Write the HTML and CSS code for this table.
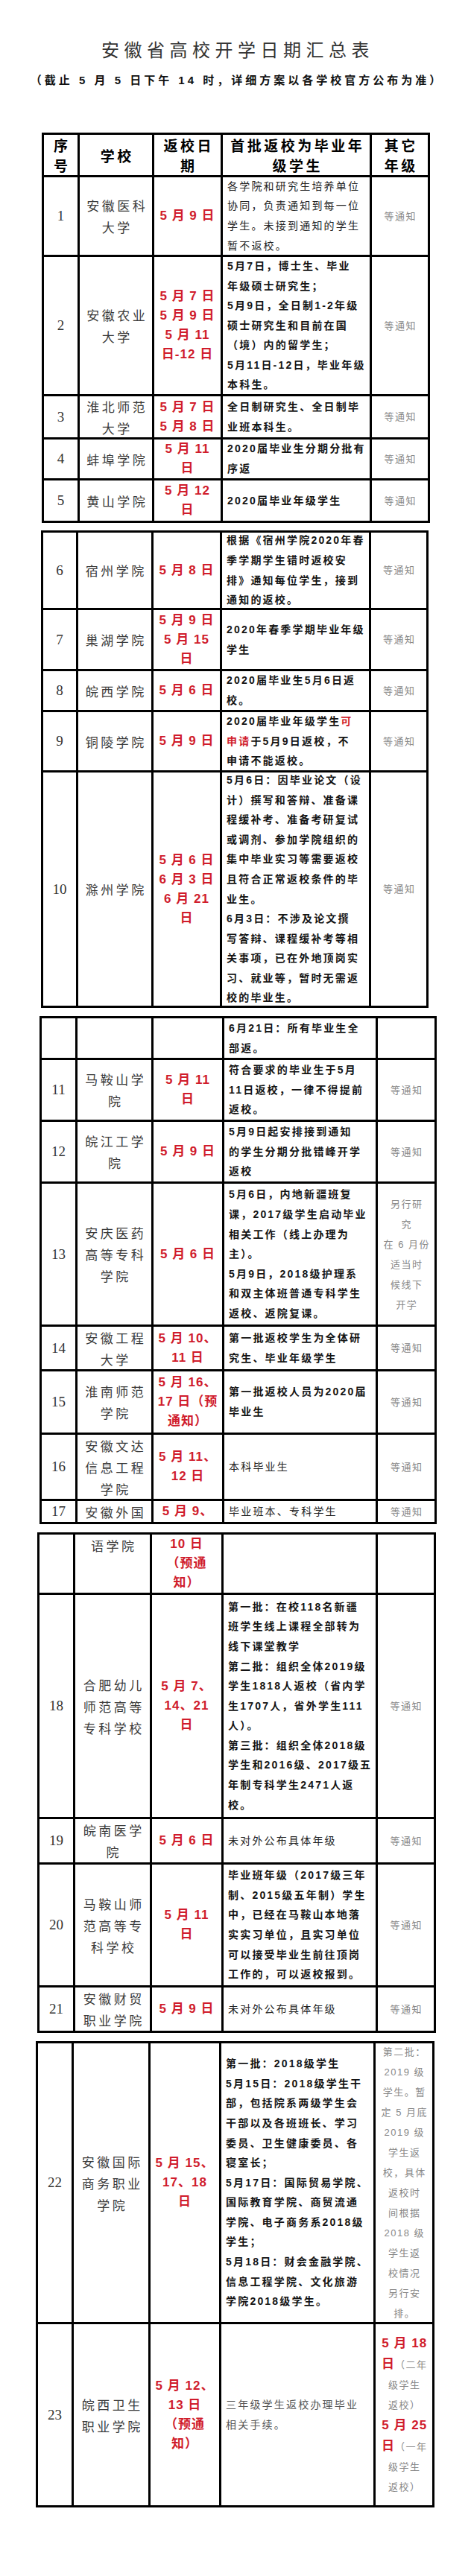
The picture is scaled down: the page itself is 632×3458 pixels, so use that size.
FILE: index.html
```html
<!DOCTYPE html>
<html lang="zh-CN">
<head>
<meta charset="utf-8">
<title>安徽省高校开学日期汇总表</title>
<link rel="stylesheet" href="styles.css">
</head>
<body>
<div class="page">
  <h1 class="title">安徽省高校开学日期汇总表</h1>
  <p class="subtitle">（截止 5 月 5 日下午 14 时，详细方案以各学校官方公布为准）</p>

  <div class="tbl t1">
    <div class="c hd"><span class="in">序<br>号</span></div>
    <div class="c hd"><span class="in">学校</span></div>
    <div class="c hd"><span class="in">返校日<br>期</span></div>
    <div class="c hd"><span class="in">首批返校为毕业年<br>级学生</span></div>
    <div class="c hd"><span class="in">其它<br>年级</span></div>

    <div class="c n"><span class="in">1</span></div>
    <div class="c s"><span class="in">安徽医科<br>大学</span></div>
    <div class="c d"><span class="in">5 月 9 日</span></div>
    <div class="c t lt"><span class="in">各学院和研究生培养单位<br>协同，负责通知到每一位<br>学生。未接到通知的学生<br>暂不返校。</span></div>
    <div class="c o"><span class="in">等通知</span></div>

    <div class="c n"><span class="in">2</span></div>
    <div class="c s"><span class="in">安徽农业<br>大学</span></div>
    <div class="c d"><span class="in">5 月 7 日<br>5 月 9 日<br>5 月 11<br>日-12 日</span></div>
    <div class="c t"><span class="in">5月7日，博士生、毕业<br>年级硕士研究生；<br>5月9日，全日制1-2年级<br>硕士研究生和目前在国<br>（境）内的留学生；<br>5月11日-12日，毕业年级<br>本科生。</span></div>
    <div class="c o"><span class="in">等通知</span></div>

    <div class="c n"><span class="in">3</span></div>
    <div class="c s"><span class="in">淮北师范<br>大学</span></div>
    <div class="c d"><span class="in">5 月 7 日<br>5 月 8 日</span></div>
    <div class="c t"><span class="in">全日制研究生、全日制毕<br>业班本科生。</span></div>
    <div class="c o"><span class="in">等通知</span></div>

    <div class="c n"><span class="in">4</span></div>
    <div class="c s"><span class="in">蚌埠学院</span></div>
    <div class="c d"><span class="in">5 月 11<br>日</span></div>
    <div class="c t"><span class="in">2020届毕业生分期分批有<br>序返</span></div>
    <div class="c o"><span class="in">等通知</span></div>

    <div class="c n"><span class="in">5</span></div>
    <div class="c s"><span class="in">黄山学院</span></div>
    <div class="c d"><span class="in">5 月 12<br>日</span></div>
    <div class="c t"><span class="in">2020届毕业年级学生</span></div>
    <div class="c o"><span class="in">等通知</span></div>
  </div>

  <div class="tbl t2">
    <div class="c n"><span class="in">6</span></div>
    <div class="c s"><span class="in">宿州学院</span></div>
    <div class="c d"><span class="in">5 月 8 日</span></div>
    <div class="c t"><span class="in">根据《宿州学院2020年春<br>季学期学生错时返校安<br>排》通知每位学生，接到<br>通知的返校。</span></div>
    <div class="c o"><span class="in">等通知</span></div>

    <div class="c n"><span class="in">7</span></div>
    <div class="c s"><span class="in">巢湖学院</span></div>
    <div class="c d"><span class="in">5 月 9 日<br>5 月 15<br>日</span></div>
    <div class="c t"><span class="in">2020年春季学期毕业年级<br>学生</span></div>
    <div class="c o"><span class="in">等通知</span></div>

    <div class="c n"><span class="in">8</span></div>
    <div class="c s"><span class="in">皖西学院</span></div>
    <div class="c d"><span class="in">5 月 6 日</span></div>
    <div class="c t"><span class="in">2020届毕业生5月6日返<br>校。</span></div>
    <div class="c o"><span class="in">等通知</span></div>

    <div class="c n"><span class="in">9</span></div>
    <div class="c s"><span class="in">铜陵学院</span></div>
    <div class="c d"><span class="in">5 月 9 日</span></div>
    <div class="c t"><span class="in">2020届毕业年级学生<em class="red">可</em><br><em class="red">申请</em>于5月9日返校，不<br>申请不能返校。</span></div>
    <div class="c o"><span class="in">等通知</span></div>

    <div class="c n"><span class="in">10</span></div>
    <div class="c s"><span class="in">滁州学院</span></div>
    <div class="c d"><span class="in">5 月 6 日<br>6 月 3 日<br>6 月 21<br>日</span></div>
    <div class="c t"><span class="in">5月6日：因毕业论文（设<br>计）撰写和答辩、准备课<br>程缓补考、准备考研复试<br>或调剂、参加学院组织的<br>集中毕业实习等需要返校<br>且符合正常返校条件的毕<br>业生。<br>6月3日：不涉及论文撰<br>写答辩、课程缓补考等相<br>关事项，已在外地顶岗实<br>习、就业等，暂时无需返<br>校的毕业生。</span></div>
    <div class="c o"><span class="in">等通知</span></div>
  </div>

  <div class="tbl t3">
    <div class="c n"></div>
    <div class="c s"></div>
    <div class="c d"></div>
    <div class="c t"><span class="in">6月21日：所有毕业生全<br>部返。</span></div>
    <div class="c o"></div>

    <div class="c n"><span class="in">11</span></div>
    <div class="c s"><span class="in">马鞍山学<br>院</span></div>
    <div class="c d"><span class="in">5 月 11<br>日</span></div>
    <div class="c t"><span class="in">符合要求的毕业生于5月<br>11日返校，一律不得提前<br>返校。</span></div>
    <div class="c o"><span class="in">等通知</span></div>

    <div class="c n"><span class="in">12</span></div>
    <div class="c s"><span class="in">皖江工学<br>院</span></div>
    <div class="c d"><span class="in">5 月 9 日</span></div>
    <div class="c t"><span class="in">5月9日起安排接到通知<br>的学生分期分批错峰开学<br>返校</span></div>
    <div class="c o"><span class="in">等通知</span></div>

    <div class="c n"><span class="in">13</span></div>
    <div class="c s"><span class="in">安庆医药<br>高等专科<br>学院</span></div>
    <div class="c d"><span class="in">5 月 6 日</span></div>
    <div class="c t"><span class="in">5月6日，内地新疆班复<br>课，2017级学生启动毕业<br>相关工作（线上办理为<br>主）。<br>5月9日，2018级护理系<br>和双主体班普通专科学生<br>返校、返院复课。</span></div>
    <div class="c o"><span class="in">另行研<br>究<br>在 6 月份<br>适当时<br>候线下<br>开学</span></div>

    <div class="c n"><span class="in">14</span></div>
    <div class="c s"><span class="in">安徽工程<br>大学</span></div>
    <div class="c d"><span class="in">5 月 10、<br>11 日</span></div>
    <div class="c t"><span class="in">第一批返校学生为全体研<br>究生、毕业年级学生</span></div>
    <div class="c o"><span class="in">等通知</span></div>

    <div class="c n"><span class="in">15</span></div>
    <div class="c s"><span class="in">淮南师范<br>学院</span></div>
    <div class="c d"><span class="in">5 月 16、<br>17 日（预<br>通知）</span></div>
    <div class="c t"><span class="in">第一批返校人员为2020届<br>毕业生</span></div>
    <div class="c o"><span class="in">等通知</span></div>

    <div class="c n"><span class="in">16</span></div>
    <div class="c s"><span class="in">安徽文达<br>信息工程<br>学院</span></div>
    <div class="c d"><span class="in">5 月 11、<br>12 日</span></div>
    <div class="c t lt"><span class="in">本科毕业生</span></div>
    <div class="c o"><span class="in">等通知</span></div>

    <div class="c n"><span class="in">17</span></div>
    <div class="c s"><span class="in">安徽外国</span></div>
    <div class="c d"><span class="in">5 月 9、</span></div>
    <div class="c t lt"><span class="in">毕业班本、专科学生</span></div>
    <div class="c o"><span class="in">等通知</span></div>
  </div>

  <div class="tbl t4">
    <div class="c n"></div>
    <div class="c s top"><span class="in">语学院</span></div>
    <div class="c d"><span class="in">10 日<br>（预通<br>知）</span></div>
    <div class="c t"></div>
    <div class="c o"></div>

    <div class="c n"><span class="in">18</span></div>
    <div class="c s"><span class="in">合肥幼儿<br>师范高等<br>专科学校</span></div>
    <div class="c d"><span class="in">5 月 7、<br>14、21<br>日</span></div>
    <div class="c t"><span class="in">第一批：在校118名新疆<br>班学生线上课程全部转为<br>线下课堂教学<br>第二批：组织全体2019级<br>学生1818人返校（省内学<br>生1707人，省外学生111<br>人）。<br>第三批：组织全体2018级<br>学生和2016级、2017级五<br>年制专科学生2471人返<br>校。</span></div>
    <div class="c o"><span class="in">等通知</span></div>

    <div class="c n"><span class="in">19</span></div>
    <div class="c s"><span class="in">皖南医学<br>院</span></div>
    <div class="c d"><span class="in">5 月 6 日</span></div>
    <div class="c t lt"><span class="in">未对外公布具体年级</span></div>
    <div class="c o"><span class="in">等通知</span></div>

    <div class="c n"><span class="in">20</span></div>
    <div class="c s"><span class="in">马鞍山师<br>范高等专<br>科学校</span></div>
    <div class="c d"><span class="in">5 月 11<br>日</span></div>
    <div class="c t"><span class="in">毕业班年级（2017级三年<br>制、2015级五年制）学生<br>中，已经在马鞍山本地落<br>实实习单位，且实习单位<br>可以接受毕业生前往顶岗<br>工作的，可以返校报到。</span></div>
    <div class="c o"><span class="in">等通知</span></div>

    <div class="c n"><span class="in">21</span></div>
    <div class="c s"><span class="in">安徽财贸<br>职业学院</span></div>
    <div class="c d"><span class="in">5 月 9 日</span></div>
    <div class="c t lt"><span class="in">未对外公布具体年级</span></div>
    <div class="c o"><span class="in">等通知</span></div>
  </div>

  <div class="tbl t5">
    <div class="c n"><span class="in">22</span></div>
    <div class="c s"><span class="in">安徽国际<br>商务职业<br>学院</span></div>
    <div class="c d"><span class="in">5 月 15、<br>17、18<br>日</span></div>
    <div class="c t"><span class="in">第一批：2018级学生<br>5月15日：2018级学生干<br>部，包括院系两级学生会<br>干部以及各班班长、学习<br>委员、卫生健康委员、各<br>寝室长；<br>5月17日：国际贸易学院、<br>国际教育学院、商贸流通<br>学院、电子商务系2018级<br>学生；<br>5月18日：财会金融学院、<br>信息工程学院、文化旅游<br>学院2018级学生。</span></div>
    <div class="c o"><span class="in">第二批：<br>2019 级<br>学生。暂<br>定 5 月底<br>2019 级<br>学生返<br>校，具体<br>返校时<br>间根据<br>2018 级<br>学生返<br>校情况<br>另行安<br>排。</span></div>

    <div class="c n"><span class="in">23</span></div>
    <div class="c s"><span class="in">皖西卫生<br>职业学院</span></div>
    <div class="c d"><span class="in">5 月 12、<br>13 日<br>（预通<br>知）</span></div>
    <div class="c t pale"><span class="in">三年级学生返校办理毕业<br>相关手续。</span></div>
    <div class="c o"><span class="in"><b class="big">5 月 18</b><br><b class="big">日</b>（二年<br>级学生<br>返校）<br><b class="big">5 月 25</b><br><b class="big">日</b>（一年<br>级学生<br>返校）</span></div>
  </div>
</div>
</body>
</html>
```

FILE: styles.css
```css
html, body {
  margin: 0;
  padding: 0;
  background: #fff;
}

body {
  font-family: "Liberation Sans", "Noto Sans CJK SC", sans-serif;
  color: #111;
}

.page {
  width: 632px;
}

.title {
  margin: 51px 0 0;
  padding-left: 6px;
  text-align: center;
  font-family: "Noto Sans CJK SC", sans-serif;
  font-weight: 400;
  font-size: 24px;
  line-height: 30px;
  letter-spacing: 6.5px;
  color: #333;
}

.subtitle {
  margin: 17px 0 0;
  padding-left: 4px;
  text-align: center;
  font-family: "Liberation Sans", "Noto Sans CJK SC", sans-serif;
  font-weight: 700;
  font-size: 15px;
  line-height: 20px;
  letter-spacing: 4px;
  color: #111;
}

/* table segments */
.tbl {
  display: grid;
  box-sizing: border-box;
  border-top: 3px solid #000;
  border-left: 3px solid #000;
}

.t1 {
  margin: 60px 0 0 56px;
  width: 521px;
  grid-template-columns: 48px 100px 92px 200px 78px;
  grid-template-rows: 57px 107px 187px 58px 55px 57px;
}

.t2 {
  margin: 10px 0 0 55px;
  width: 520px;
  grid-template-columns: 47px 101px 92px 200px 77px;
  grid-template-rows: 104px 82px 55px 81px 316px;
}

.t3 {
  margin: 11px 0 0 53px;
  width: 533px;
  grid-template-columns: 48px 102px 95px 206px 79px;
  grid-template-rows: 56px 83px 83px 192px 60px 85px 89px 31px;
}

.t4 {
  margin: 11px 0 0 50px;
  width: 535px;
  grid-template-columns: 48px 103px 96px 207px 78px;
  grid-template-rows: 81px 301px 61px 165px 61px;
}

.t5 {
  margin: 11px 0 0 48px;
  width: 535px;
  grid-template-columns: 48px 103px 95px 207px 79px;
  grid-template-rows: 377px 246px;
}

/* cells */
.c {
  box-sizing: border-box;
  border-right: 3px solid #000;
  border-bottom: 3px solid #000;
  display: flex;
  align-items: center;
  justify-content: center;
  text-align: center;
  white-space: nowrap;
  overflow: hidden;
  min-width: 0;
}

.in {
  display: block;
}

.hd {
  font-family: "Noto Sans CJK SC", sans-serif;
  font-weight: 700;
  font-size: 19px;
  line-height: 27px;
  letter-spacing: 3.5px;
  color: #000;
}

.hd .in {
  padding-left: 3.5px;
}

.n {
  font-family: "Liberation Serif", serif;
  font-size: 19px;
  color: #333;
}

.s {
  font-family: "Noto Sans CJK SC", sans-serif;
  font-size: 17px;
  line-height: 29px;
  letter-spacing: 3.5px;
  color: #3a3a3a;
}

.s .in {
  padding-left: 3.5px;
}

.s.top {
  align-items: flex-start;
}

.d {
  font-family: "Liberation Sans", "Noto Sans CJK SC", sans-serif;
  font-weight: 700;
  font-size: 17px;
  line-height: 26px;
  letter-spacing: 1px;
  color: #d01c2c;
}

.t {
  justify-content: flex-start;
  text-align: left;
  padding-left: 6px;
  font-family: "Liberation Sans", "Noto Sans CJK SC", sans-serif;
  font-weight: 700;
  font-size: 14px;
  line-height: 26.6px;
  letter-spacing: 2.2px;
  color: #141414;
}

.t.lt {
  font-weight: 400;
  color: #222;
}

.t.pale {
  font-weight: 400;
  color: #555;
}

.red {
  font-style: normal;
  color: #d01c2c;
}

.o {
  font-family: "Liberation Sans", "Noto Sans CJK SC", sans-serif;
  font-size: 13px;
  line-height: 27px;
  letter-spacing: 1.5px;
  color: #888;
}

.o .in {
  padding-left: 1.5px;
}

.big {
  font-weight: 700;
  font-size: 17px;
  letter-spacing: 1px;
  color: #d01c2c;
}
```
